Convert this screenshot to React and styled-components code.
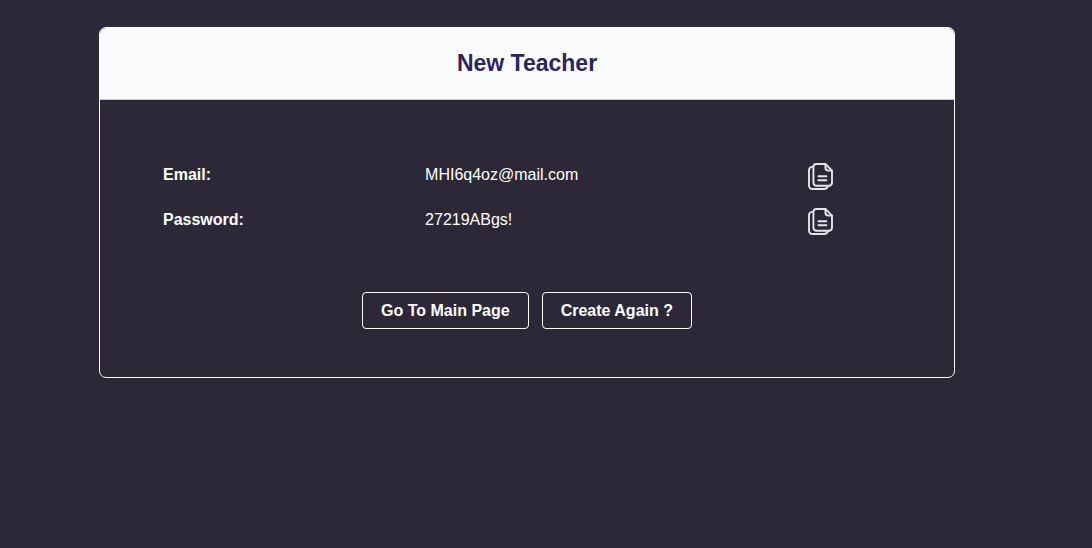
import React from "react";
import styled, { createGlobalStyle } from "styled-components";

const GlobalStyle = createGlobalStyle`
  *, *::before, *::after { box-sizing: border-box; }
  body {
    margin: 0;
    background: #2c2838;
    color: #fff;
    font-family: Arial, "Liberation Sans", sans-serif;
    font-size: 16px;
    line-height: 24px;
  }
`;

const Page = styled.main`
  padding: 27px 137px 27px 99px;
`;

const Card = styled.section`
  border: 1px solid #fff;
  border-radius: 7px;
  overflow: hidden;
`;

const CardHeader = styled.header`
  padding: 21px 16px 22px;
  background: #f8fafc;
  border-bottom: 1px solid #c9cacd;
  text-align: center;
`;

const Title = styled.h1`
  margin: 0;
  color: #2c2559;
  font-size: 23px;
  line-height: 28px;
  font-weight: 700;
`;

const CardBody = styled.div`
  padding: 63px 63px 48px;
`;

const Credentials = styled.dl`
  display: flex;
  flex-direction: column;
  gap: 18px;
  margin: 0;
`;

const CredentialRow = styled.div`
  display: grid;
  grid-template-columns: 36% 1fr 83px;
  align-items: start;
`;

const Label = styled.dt`
  font-weight: 700;
`;

const Value = styled.dd`
  margin: 0;
`;

const CopyCell = styled.dd`
  display: flex;
  margin: 0;
`;

const CopyButton = styled.button`
  display: flex;
  padding: 0;
  border: 0;
  background: none;
  color: #e6e5e8;
  cursor: pointer;
`;

const Actions = styled.div`
  display: flex;
  flex-wrap: wrap;
  justify-content: center;
  gap: 13px;
  margin-top: 57px;
`;

const ActionButton = styled.button`
  padding: 6px 18px;
  border: 1px solid #fff;
  border-radius: 4px;
  background: transparent;
  color: #fff;
  font: inherit;
  font-weight: 700;
  line-height: 23px;
  cursor: pointer;
`;

function CopyIcon() {
  return (
    <svg
      width="25"
      height="27"
      viewBox="0 0 25 27"
      fill="none"
      stroke="currentColor"
      strokeWidth="1.9"
      strokeLinecap="round"
      strokeLinejoin="round"
      aria-hidden="true"
    >
      <path d="M17.4 1H8.6Q5.4 1 5.4 4.2V19.6Q5.4 22.8 8.6 22.8H20.8Q24 22.8 24 19.6V7.6Z" />
      <path d="M17.4 1V4.6Q17.4 7.6 20.4 7.6H24" />
      <path d="M5.2 3.6Q1 3.8 1 7.4V22.2Q1 26 4.8 26H16Q19.2 26 20 23" />
      <path d="M10.4 13.2H18.4M10.4 17.2H18.4" />
    </svg>
  );
}

const credentials = [
  { label: "Email", value: "MHI6q4oz@mail.com" },
  { label: "Password", value: "27219ABgs!" },
];

export default function App() {
  const copy = (text) => navigator.clipboard?.writeText(text);

  return (
    <>
      <GlobalStyle />
      <Page>
        <Card>
          <CardHeader>
            <Title>New Teacher</Title>
          </CardHeader>
          <CardBody>
            <Credentials>
              {credentials.map(({ label, value }) => (
                <CredentialRow key={label}>
                  <Label>{label}:</Label>
                  <Value>{value}</Value>
                  <CopyCell>
                    <CopyButton
                      type="button"
                      aria-label={`Copy ${label.toLowerCase()}`}
                      onClick={() => copy(value)}
                    >
                      <CopyIcon />
                    </CopyButton>
                  </CopyCell>
                </CredentialRow>
              ))}
            </Credentials>
            <Actions>
              <ActionButton type="button">Go To Main Page</ActionButton>
              <ActionButton type="button">Create Again ?</ActionButton>
            </Actions>
          </CardBody>
        </Card>
      </Page>
    </>
  );
}
